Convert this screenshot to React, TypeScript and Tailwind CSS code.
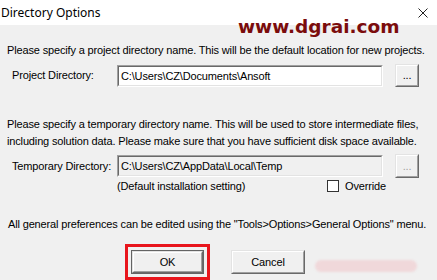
import React from "react";

const ui = { fontFamily: '"Liberation Sans", Arial, sans-serif' };

function Sunken({ value, disabled }: { value: string; disabled?: boolean }) {
  return (
    <div className="w-[266px] h-[22px] border border-t-[#a0a0a0] border-l-[#a0a0a0] border-b-white border-r-white">
      <div
        className={
          "h-full border border-t-[#696969] border-l-[#696969] border-b-[#e3e3e3] border-r-[#e3e3e3] pl-[2px] leading-[18px] text-[11px] text-black " +
          (disabled ? "bg-[#f0f0f0]" : "bg-white")
        }
      >
        {value}
      </div>
    </div>
  );
}

function Raised({
  children,
  className,
  dim,
}: {
  children: React.ReactNode;
  className: string;
  dim?: boolean;
}) {
  return (
    <div className={"border border-t-[#e3e3e3] border-l-[#e3e3e3] border-b-[#696969] border-r-[#696969] " + className}>
      <div
        className={
          "h-full border border-t-white border-l-white border-b-[#a0a0a0] border-r-[#a0a0a0] bg-[#f0f0f0] flex items-center justify-center " +
          (dim ? "text-[#a0a0a0]" : "text-black")
        }
      >
        {children}
      </div>
    </div>
  );
}

export default function App() {
  return (
    <div className="relative w-[437px] h-[280px] overflow-hidden bg-[#f0f0f0] text-black" style={ui}>
      {/* title bar */}
      <div className="h-[25px] bg-white flex items-center justify-between pl-[1px] pr-[9px]">
        <span className="text-[12px]" style={{ fontFamily: '"Noto Sans", sans-serif' }}>
          Directory Options
        </span>
        <svg width="10" height="10" viewBox="0 0 10 10" className="mt-[1px]">
          <path d="M0.5 0.5 L9.5 9.5 M9.5 0.5 L0.5 9.5" stroke="#222" strokeWidth="1" />
        </svg>
      </div>

      {/* watermark */}
      <div
        className="absolute left-[238px] top-[13px] text-[18.5px] font-bold text-[#7b0c0c]"
        style={{ fontFamily: '"DejaVu Sans", Verdana, sans-serif' }}
      >
        www.dgrai.com
      </div>

      <div className="pl-[7px] text-[11px] tracking-[-0.15px]">
        <p className="mt-[18px] leading-[14px]">
          Please specify a project directory name. This will be the default location for new projects.
        </p>

        <div className="flex items-center h-[23px] mt-[7px]">
          <span className="w-[110px] pl-[5px]">Project Directory:</span>
          <Sunken value="C:\Users\CZ\Documents\Ansoft" />
          <Raised className="ml-[12px] w-[24px] h-[23px]">...</Raised>
        </div>

        <div className="mt-[29px] leading-[17px]">
          <p>Please specify a temporary directory name. This will be used to store intermediate files,</p>
          <p>including solution data. Please make sure that you have sufficient disk space available.</p>
        </div>

        <div className="flex items-center h-[24px] mt-[4px]">
          <span className="w-[110px] pl-[5px]">Temporary Directory:</span>
          <Sunken value="C:\Users\CZ\AppData\Local\Temp" disabled />
          <Raised className="ml-[12px] w-[24px] h-[24px]" dim>
            ...
          </Raised>
        </div>

        <div className="flex items-center h-[14px] mt-[1px]">
          <span className="ml-[110px] w-[210px]">(Default installation setting)</span>
          <div className="w-[12px] h-[12px] bg-white border border-[#333]" />
          <span className="ml-[6px]">Override</span>
        </div>

        <p className="mt-[24px] leading-[14px] pl-[1px]">
          All general preferences can be edited using the "Tools&gt;Options&gt;General Options" menu.
        </p>

        <div className="flex items-center mt-[13px]">
          <div className="ml-[118px] border-[3px] border-[#e8151c] p-[3px]">
            <div className="border border-[#646464]">
              <Raised className="w-[71px] h-[22px]">OK</Raised>
            </div>
          </div>
          <Raised className="ml-[21px] w-[74px] h-[24px]">Cancel</Raised>
          <div className="ml-[10px] w-[102px] h-[12px] rounded-[6px] bg-[#f0d8da] blur-[1px] mt-[8px]" />
        </div>
      </div>
    </div>
  );
}
